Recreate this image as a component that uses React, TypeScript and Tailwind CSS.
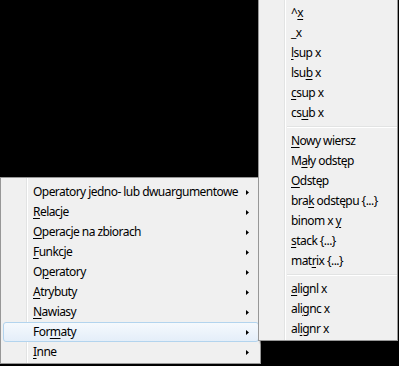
import React from "react"

type Item = { pre: string; key: string; post: string; sub?: boolean; active?: boolean }

const leftItems: Item[] = [
    { pre: "Operatory ", key: "j", post: "edno- lub dwuargumentowe", sub: true },
    { pre: "", key: "R", post: "elacje", sub: true },
    { pre: "", key: "O", post: "peracje na zbiorach", sub: true },
    { pre: "", key: "F", post: "unkcje", sub: true },
    { pre: "O", key: "p", post: "eratory", sub: true },
    { pre: "", key: "A", post: "trybuty", sub: true },
    { pre: "", key: "N", post: "awiasy", sub: true },
    { pre: "For", key: "m", post: "aty", sub: true, active: true },
    { pre: "", key: "I", post: "nne", sub: true },
]

const rightGroups: Item[][] = [
    [
        { pre: "^", key: "x", post: "" },
        { pre: "_x", key: "", post: "" },
        { pre: "", key: "l", post: "sup x" },
        { pre: "lsu", key: "b", post: " x" },
        { pre: "", key: "c", post: "sup x" },
        { pre: "cs", key: "u", post: "b x" },
    ],
    [
        { pre: "", key: "N", post: "owy wiersz" },
        { pre: "M", key: "a", post: "ły odstęp" },
        { pre: "", key: "O", post: "dstęp" },
        { pre: "bra", key: "k", post: " odstępu {...}" },
        { pre: "binom x ", key: "y", post: "" },
        { pre: "", key: "s", post: "tack {...}" },
        { pre: "mat", key: "r", post: "ix {...}" },
    ],
    [
        { pre: "", key: "a", post: "lignl x" },
        { pre: "ali", key: "g", post: "nc x" },
        { pre: "al", key: "i", post: "gnr x" },
    ],
]

const Arrow = () => (
    <svg width="3" height="5" viewBox="0 0 3 5" className="ml-auto mr-[9px] shrink-0">
        <path d="M0 0 L3 2.5 L0 5 Z" fill="#000" />
    </svg>
)

const MenuRow = ({ item }: { item: Item }) => (
    <div
        className={
            "h-5 flex items-center rounded-[3px] border ml-[2px] mr-px pl-[29px] " +
            (item.active
                ? "border-[#b3d4ee] bg-gradient-to-b from-[#f5f9fd] to-[#e4eef9]"
                : "border-transparent")
        }
    >
        <span className="whitespace-nowrap tracking-[-0.55px]">
            {item.pre}
            {item.key && <span className="underline underline-offset-2 decoration-1">{item.key}</span>}
            {item.post}
        </span>
        {item.sub && <Arrow />}
    </div>
)

const Separator = () => (
    <div className="h-2 flex flex-col justify-center pl-[28px]">
        <div className="h-px bg-[#e2e3e3]" />
        <div className="h-px bg-white" />
    </div>
)

const Menu = ({ children, className }: { children: React.ReactNode; className: string }) => (
    <div className={"absolute border border-[#979797] bg-[#f0f0f0] pt-1 pb-px shadow-[2px_2px_2px_rgba(0,0,0,0.45)] " + className}>
        <div className="absolute top-0 bottom-0 left-[25px] w-px bg-[#e2e3e3]" />
        <div className="absolute top-0 bottom-0 left-[26px] w-px bg-white" />
        <div className="relative flex flex-col">{children}</div>
    </div>
)

export default function App() {
    return (
        <div
            className="relative w-[399px] h-[366px] bg-black overflow-hidden text-[12px] text-black"
            style={{ fontFamily: '"Noto Sans", "Open Sans", sans-serif' }}
        >
            <Menu className="left-0 top-[177px] w-[261px]">
                {leftItems.map((it, i) => (
                    <MenuRow key={i} item={it} />
                ))}
            </Menu>
            <Menu className="left-[258px] top-[-2px] w-[140px] z-10">
                {rightGroups.map((g, gi) => (
                    <div key={gi} className="flex flex-col">
                        {gi > 0 && <Separator />}
                        {g.map((it, i) => (
                            <MenuRow key={i} item={it} />
                        ))}
                    </div>
                ))}
            </Menu>
        </div>
    )
}
